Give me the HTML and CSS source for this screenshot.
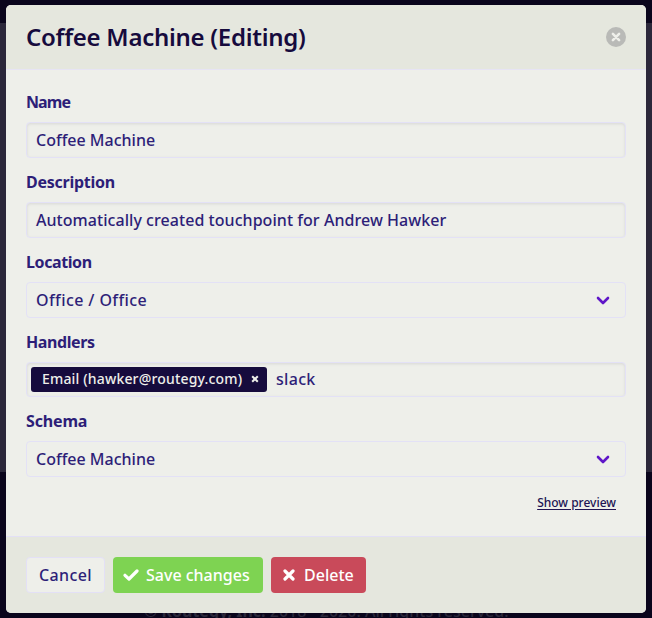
FILE: index.html
```html
<!DOCTYPE html>
<html lang="en">
<head>
<meta charset="utf-8">
<title>Coffee Machine (Editing)</title>
<link rel="stylesheet" href="styles.css">
</head>
<body>
<p class="copyright">© <b>Routegy, Inc.</b> 2018 - 2020. All rights reserved.</p>
<main class="modal">
  <header class="modal-header">
    <h1><span>Coffee Machine (Editing)</span></h1>
    <svg class="close" viewBox="0 0 20 20"><circle cx="10" cy="10" r="10"/><path d="M6.9 6.9l6.2 6.2M13.1 6.9l-6.2 6.2"/></svg>
  </header>
  <section class="modal-body">
    <div class="field"><label><span class="l-name">Name</span></label><div class="control input"><span class="t-coffee">Coffee Machine</span></div></div>
    <div class="field"><label><span class="l-desc">Description</span></label><div class="control input"><span class="t-auto">Automatically created touchpoint for Andrew Hawker</span></div></div>
    <div class="field"><label><span class="l-loc">Location</span></label><div class="control select"><span class="t-office">Office / Office</span><svg class="chevron" viewBox="0 0 14 9"><path d="M2 2l5 5 5-5"/></svg></div></div>
    <div class="field"><label><span class="l-hand">Handlers</span></label><div class="control input tags"><div class="tag"><span class="t-email">Email (hawker@routegy.com)</span><svg viewBox="0 0 8 8"><path d="M1.2 1.2l5.6 5.6M6.8 1.2L1.2 6.8"/></svg></div><span class="t-slack">slack</span></div></div>
    <div class="field"><label><span class="l-schema">Schema</span></label><div class="control select"><span class="t-coffee">Coffee Machine</span><svg class="chevron" viewBox="0 0 14 9"><path d="M2 2l5 5 5-5"/></svg></div></div>
    <a class="preview"><span>Show preview</span></a>
  </section>
  <footer class="modal-footer">
    <button class="btn cancel"><span>Cancel</span></button>
    <button class="btn save"><svg viewBox="0 0 16 12"><path d="M2 6.3l4 3.7L14 2"/></svg><span>Save changes</span></button>
    <button class="btn delete"><svg viewBox="0 0 12 12"><path d="M2 2l8 8M10 2l-8 8"/></svg><span>Delete</span></button>
  </footer>
</main>
</body>
</html>
```
FILE: styles.css
```css
* { box-sizing: border-box; }
body {
  margin: 0;
  height: 618px;
  padding: 5px 6px;
  overflow: hidden;
  font: 500 16px "Noto Sans", sans-serif;
  color: #2d1e78;
  background: linear-gradient(#0a051c 0 23px, #2b273a 23px 472px, #0a051c 472px);
}
.copyright {
  position: absolute;
  left: 144px;
  top: 600px;
  margin: 0;
  font-size: 16px;
  line-height: 22px;
  white-space: nowrap;
  color: #2b273a;
}
.modal {
  position: relative;
  height: 608px;
  display: flex;
  flex-direction: column;
  border-radius: 5px;
  overflow: hidden;
  background: #eeefea;
}
span { white-space: nowrap; }
.modal-header {
  height: 65px;
  padding: 0 20px;
  display: flex;
  align-items: center;
  justify-content: space-between;
  background: #e5e7de;
  border-bottom: 1px solid #e6e4f4;
}
h1 { margin: 0; font-size: 24px; line-height: 32px; font-weight: 600; letter-spacing: -0.27px; color: #160b3d; }
.close { width: 20px; height: 20px; }
.close circle { fill: #b9bab7; }
.close path { stroke: #eeefea; stroke-width: 2.6; stroke-linecap: round; }
.modal-body { flex: 1; padding: 20px 20px 0; display: flex; flex-direction: column; }
.field { margin-bottom: 12px; }
label { display: block; height: 32px; line-height: 24px; font-weight: 700; letter-spacing: -0.4px; }
.l-name { letter-spacing: -0.9px; }
.l-desc { letter-spacing: -0.25px; }
.l-schema { letter-spacing: -0.15px; }
.control {
  height: 36px;
  display: flex;
  align-items: center;
  padding: 0 9px;
  border: 1px solid #e3e1f6;
  border-radius: 4px;
}
.input { padding-bottom: 1px; box-shadow: inset 0 1px 3px rgba(20, 10, 40, .1); }
.select { justify-content: space-between; padding-right: 15px; }
.chevron { width: 14px; height: 9px; }
.chevron path { fill: none; stroke: #5f16c8; stroke-width: 2.6; stroke-linecap: round; stroke-linejoin: round; }
.t-auto { letter-spacing: 0.05px; }
.t-office { letter-spacing: 0.4px; }
.t-email { letter-spacing: 0.17px; }
.t-slack { letter-spacing: 0.3px; }
.tags { height: 35px; padding: 0 4px 1px; gap: 9px; }
.tag {
  width: 236px;
  height: 25px;
  padding: 0 8px 1px 11px;
  display: flex;
  align-items: center;
  justify-content: space-between;
  font-size: 14px;
  color: #eeefea;
  background: #160b3d;
  border-radius: 3px;
}
.tag svg { width: 8px; height: 8px; margin-top: 1px; }
.tag path { stroke: #eeefea; stroke-width: 2; }
.preview { align-self: flex-end; margin: 4px 10px 0; font-size: 12px; line-height: 20px; color: #211453; text-decoration: underline; text-underline-offset: 2px; }
.modal-footer {
  height: 77px;
  padding: 20px;
  display: flex;
  gap: 8px;
  background: #e5e7de;
  border-top: 1px solid #e3e0f6;
}
.btn {
  height: 36px;
  padding: 0;
  display: flex;
  align-items: center;
  border: 0;
  border-radius: 4px;
  font: inherit;
  color: #fff;
}
.btn path { fill: none; stroke: #fff; stroke-width: 3.2; stroke-linecap: round; stroke-linejoin: round; }
.cancel { width: 79px; justify-content: center; letter-spacing: 0.4px; color: #2d1e78; background: #eeefea; border: 1px solid #e3e0f6; }
.save { width: 150px; padding-left: 10px; gap: 7px; background: #7ed352; }
.save svg { width: 16px; height: 12px; }
.delete { width: 95px; padding-left: 12px; gap: 9px; background: #c94a5a; }
.delete svg { width: 12px; height: 12px; }
```
